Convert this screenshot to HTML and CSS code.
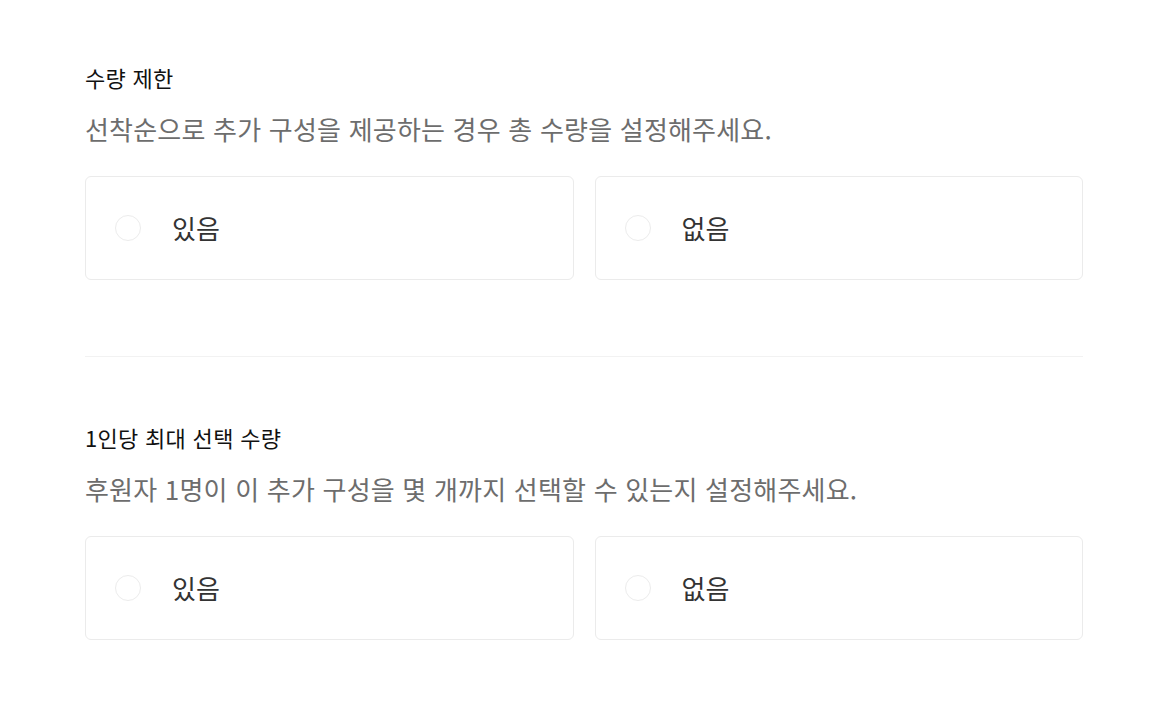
FILE: index.html
```html
<!DOCTYPE html>
<html lang="ko">
<head>
  <meta charset="UTF-8">
  <meta name="viewport" content="width=device-width, initial-scale=1.0">
  <title>추가 구성 설정</title>
  <link rel="stylesheet" href="styles.css">
</head>
<body>
  <div class="form-wrap">
    <section class="field">
      <h3 class="field-title">수량 제한</h3>
      <p class="field-desc">선착순으로 추가 구성을 제공하는 경우 총 수량을 설정해주세요.</p>
      <div class="options">
        <label class="option">
          <input type="radio" name="limit">
          <span class="radio"></span>
          <span class="option-text">있음</span>
        </label>
        <label class="option">
          <input type="radio" name="limit">
          <span class="radio"></span>
          <span class="option-text">없음</span>
        </label>
      </div>
    </section>

    <hr class="divider">

    <section class="field">
      <h3 class="field-title">1인당 최대 선택 수량</h3>
      <p class="field-desc">후원자 1명이 이 추가 구성을 몇 개까지 선택할 수 있는지 설정해주세요.</p>
      <div class="options">
        <label class="option">
          <input type="radio" name="per-person">
          <span class="radio"></span>
          <span class="option-text">있음</span>
        </label>
        <label class="option">
          <input type="radio" name="per-person">
          <span class="radio"></span>
          <span class="option-text">없음</span>
        </label>
      </div>
    </section>
  </div>
</body>
</html>
```

FILE: styles.css
```css
body {
  margin: 0;
  background: #fff;
  font-family: "Noto Sans CJK KR", "Noto Sans", sans-serif;
}

.form-wrap {
  width: 998px;
  margin-left: 85px;
  padding-top: 62px;
}

.field-title {
  margin: 0;
  font-size: 22px;
  font-weight: 400;
  line-height: 30px;
  letter-spacing: 0.3px;
  color: #111;
}

.field-desc {
  margin: 18px 0 0;
  font-size: 26px;
  line-height: 38px;
  letter-spacing: 0.2px;
  color: #6d6d6d;
}

.options {
  display: flex;
  gap: 21px;
  margin-top: 28px;
}

.option {
  flex: 1;
  display: flex;
  align-items: center;
  height: 102px;
  padding-left: 29px;
  border: 1px solid #ebebeb;
  border-radius: 6px;
  cursor: pointer;
}

.option input {
  display: none;
}

.radio {
  width: 24px;
  height: 24px;
  border: 1px solid #ececec;
  border-radius: 50%;
  margin-right: 31px;
}

.option-text {
  font-size: 26px;
  color: #333;
  line-height: 38px;
}

.divider {
  margin: 76px 0 65px;
  border: 0;
  border-top: 1px solid #f2f2f2;
}
```
